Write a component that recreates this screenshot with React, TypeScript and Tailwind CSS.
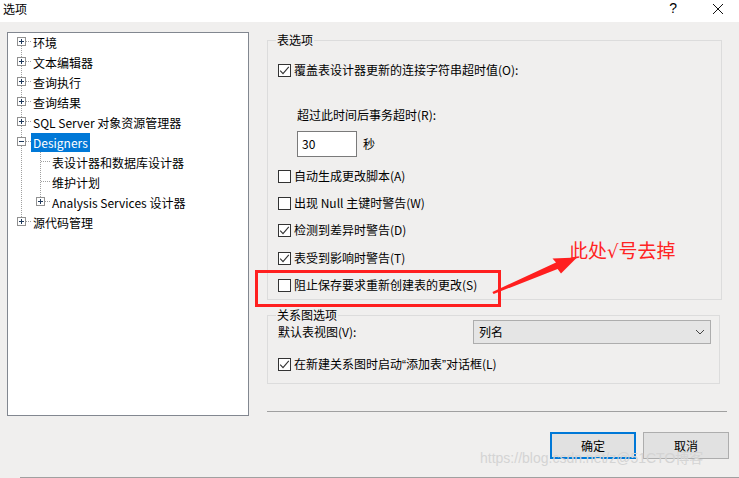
import React from "react";

const Check = ({ checked }: { checked?: boolean }) => (
  <span className="w-[13px] h-[13px] border border-[#333333] bg-white flex items-center justify-center shrink-0">
    {checked && (
      <svg width="11" height="11" viewBox="0 0 11 11">
        <path d="M1.2 5.6 L4 8.6 L9.8 1.8" stroke="#333333" strokeWidth="1.1" fill="none" />
      </svg>
    )}
  </span>
);

const CheckRow = ({ checked, label, className = "" }: { checked?: boolean; label: React.ReactNode; className?: string }) => (
  <div className={"flex items-center h-[20px] " + className}>
    <Check checked={checked} />
    <span className="ml-[3px] leading-[20px] whitespace-nowrap">{label}</span>
  </div>
);

type Kind = "first" | "mid" | "last";

const TopConn = ({ kind, expander }: { kind: Kind; expander: "plus" | "minus" }) => (
  <svg width="23" height="20" viewBox="0 0 23 20" className="shrink-0">
    <line
      x1="13.5"
      y1={kind === "first" ? 10 : 0}
      x2="13.5"
      y2={kind === "last" ? 10 : 20}
      stroke="#a0a0a0"
      strokeDasharray="1 1"
    />
    <line x1="18" y1="9.5" x2="23" y2="9.5" stroke="#a0a0a0" strokeDasharray="1 1" />
    <rect x="9.5" y="5.5" width="8" height="8" fill="white" stroke="#919191" />
    <line x1="11" y1="9.5" x2="16" y2="9.5" stroke="#1e395b" />
    {expander === "plus" && <line x1="13.5" y1="7" x2="13.5" y2="12" stroke="#1e395b" />}
  </svg>
);

const ChildConn = ({ last, expander }: { last?: boolean; expander?: boolean }) => (
  <svg width="42" height="20" viewBox="0 0 42 20" className="shrink-0">
    <line x1="13.5" y1="0" x2="13.5" y2="20" stroke="#a0a0a0" strokeDasharray="1 1" />
    <line x1="32.5" y1="0" x2="32.5" y2={last ? 10 : 20} stroke="#a0a0a0" strokeDasharray="1 1" />
    <line x1={expander ? 37 : 33} y1="9.5" x2="42" y2="9.5" stroke="#a0a0a0" strokeDasharray="1 1" />
    {expander && (
      <>
        <rect x="28.5" y="5.5" width="8" height="8" fill="white" stroke="#919191" />
        <line x1="30" y1="9.5" x2="35" y2="9.5" stroke="#1e395b" />
        <line x1="32.5" y1="7" x2="32.5" y2="12" stroke="#1e395b" />
      </>
    )}
  </svg>
);

const TopRow = ({ label, kind, expander = "plus", selected }: { label: string; kind: Kind; expander?: "plus" | "minus"; selected?: boolean }) => (
  <div className="flex items-center h-[20px]">
    <TopConn kind={kind} expander={expander} />
    <span
      className={
        "px-[2px] h-[19px] leading-[19px] whitespace-nowrap " +
        (selected ? "bg-[#0078d7] text-white" : "text-black")
      }
    >
      {label}
    </span>
  </div>
);

const ChildRow = ({ label, last, expander }: { label: string; last?: boolean; expander?: boolean }) => (
  <div className="flex items-center h-[20px]">
    <ChildConn last={last} expander={expander} />
    <span className="px-[2px] h-[19px] leading-[19px] whitespace-nowrap">{label}</span>
  </div>
);

export default function App() {
  return (
    <div className="relative w-[739px] h-[478px] overflow-hidden bg-[#f0efee] text-[12px] text-black font-['Noto_Sans_CJK_SC',sans-serif] flex flex-col">
      {/* Title bar */}
      <div className="h-[22px] bg-white flex items-start shrink-0">
        <span className="ml-[3px] mt-[0px] leading-[17px]">选项</span>
        <span className="ml-auto mt-[0px] leading-[17px] text-[14px] font-['Liberation_Sans',sans-serif]">?</span>
        <svg width="12" height="12" viewBox="0 0 12 12" className="ml-[35px] mr-[15px] mt-[3px]">
          <path d="M1 1 L11 11 M11 1 L1 11" stroke="#111" strokeWidth="1" />
        </svg>
      </div>

      {/* Main area */}
      <div className="flex pt-[10px] pl-[7px] shrink-0">
        {/* Tree */}
        <div className="w-[242px] h-[384px] border border-[#828790] bg-white shrink-0">
          <div className="flex flex-col -mt-[1px]">
            <TopRow label="环境" kind="first" />
            <TopRow label="文本编辑器" kind="mid" />
            <TopRow label="查询执行" kind="mid" />
            <TopRow label="查询结果" kind="mid" />
            <TopRow label="SQL Server 对象资源管理器" kind="mid" />
            <TopRow label="Designers" kind="mid" expander="minus" selected />
            <ChildRow label="表设计器和数据库设计器" />
            <ChildRow label="维护计划" />
            <ChildRow label="Analysis Services 设计器" last expander />
            <TopRow label="源代码管理" kind="last" />
          </div>
        </div>

        {/* Right column */}
        <div className="ml-[18px] w-[460px] flex flex-col">
          <fieldset className="w-[455px] border border-[#dcdcdc] pl-[10px] pb-[4px]">
            <legend className="-ml-[2px] px-[1px] leading-[16px]">表选项</legend>
            <CheckRow checked label="覆盖表设计器更新的连接字符串超时值(O):" className="mt-[12px]" />
            <div className="mt-[25px] pl-[19px] h-[20px] leading-[20px]">超过此时间后事务超时(R):</div>
            <div className="mt-[6px] pl-[19px] flex items-center">
              <div className="w-[60px] h-[26px] border border-[#7a7a7a] bg-white flex items-center pl-[4px] leading-[20px]">
                30
              </div>
              <span className="ml-[6px]">秒</span>
            </div>
            <CheckRow label="自动生成更改脚本(A)" className="mt-[9px]" />
            <CheckRow label="出现 Null 主键时警告(W)" className="mt-[7px]" />
            <CheckRow checked label="检测到差异时警告(D)" className="mt-[7px]" />
            <CheckRow checked label="表受到影响时警告(T)" className="mt-[8px]" />
            <CheckRow label="阻止保存要求重新创建表的更改(S)" className="mt-[7px]" />
          </fieldset>

          <fieldset className="mt-[8px] w-[453px] border border-[#dcdcdc] pl-[10px] pr-[8px] pb-[9px]">
            <legend className="-ml-[2px] px-[1px] leading-[14px]">关系图选项</legend>
            <div className="-mt-[2px] flex items-center h-[24px]">
              <span className="leading-[20px]">默认表视图(V):</span>
              <div className="ml-auto w-[238px] h-[24px] bg-[#e5e5e5] border border-[#adadad] flex items-center pl-[5px] pr-[5px]">
                <span className="leading-[20px]">列名</span>
                <svg width="10" height="6" viewBox="0 0 10 6" className="ml-auto">
                  <path d="M1 1 L5 5 L9 1" stroke="#444" strokeWidth="1" fill="none" />
                </svg>
              </div>
            </div>
            <CheckRow
              checked
              label={
                <>
                  在新建关系图时启动<span className="font-['Liberation_Sans',sans-serif]">“</span>添加表
                  <span className="font-['Liberation_Sans',sans-serif]">”</span>对话框(L)
                </>
              }
              className="mt-[10px]"
            />
          </fieldset>

          <div className="mt-[27px] w-[460px] h-px bg-[#a0a0a0]" />
        </div>
      </div>

      {/* Buttons */}
      <div className="mt-[16px] flex justify-end pr-[10px] gap-[7px] shrink-0">
        <div className="w-[86px] h-[27px] bg-[#e1e1e1] border-2 border-[#0078d7] flex items-center justify-center">
          确定
        </div>
        <div className="w-[86px] h-[27px] bg-[#e1e1e1] border border-[#adadad] flex items-center justify-center">
          取消
        </div>
      </div>

      <div className="mt-auto ml-[20px] h-px bg-[#a0a0a0] shrink-0" />

      {/* Annotation overlay */}
      <div className="absolute left-[255px] top-[270px] w-[246px] h-[37px] border-[3px] border-[#ff1f1f] pointer-events-none" />
      <svg className="absolute left-0 top-0 pointer-events-none" width="739" height="478" viewBox="0 0 739 478">
        <polygon
          points="493.6,294 557.6,269 561,273.5 577,257.5 552.5,258.5 556,262.5 492.4,292"
          fill="#ff1f1f"
        />
      </svg>
      <div className="absolute left-[569px] top-[237px] text-[19px] leading-[26px] text-[#ff2424] whitespace-nowrap">
        此处<span className="font-['DejaVu_Sans',sans-serif] text-[18px]">√</span>号去掉
      </div>

      {/* Watermark */}
      <div className="absolute left-[480px] top-[449px] text-[14px] leading-[18px] text-[#d4d4d4] whitespace-nowrap font-['Liberation_Sans','Noto_Sans_CJK_SC',sans-serif] pointer-events-none">
        https://blog.csdn.net/z@51CTO博客
      </div>
    </div>
  );
}
